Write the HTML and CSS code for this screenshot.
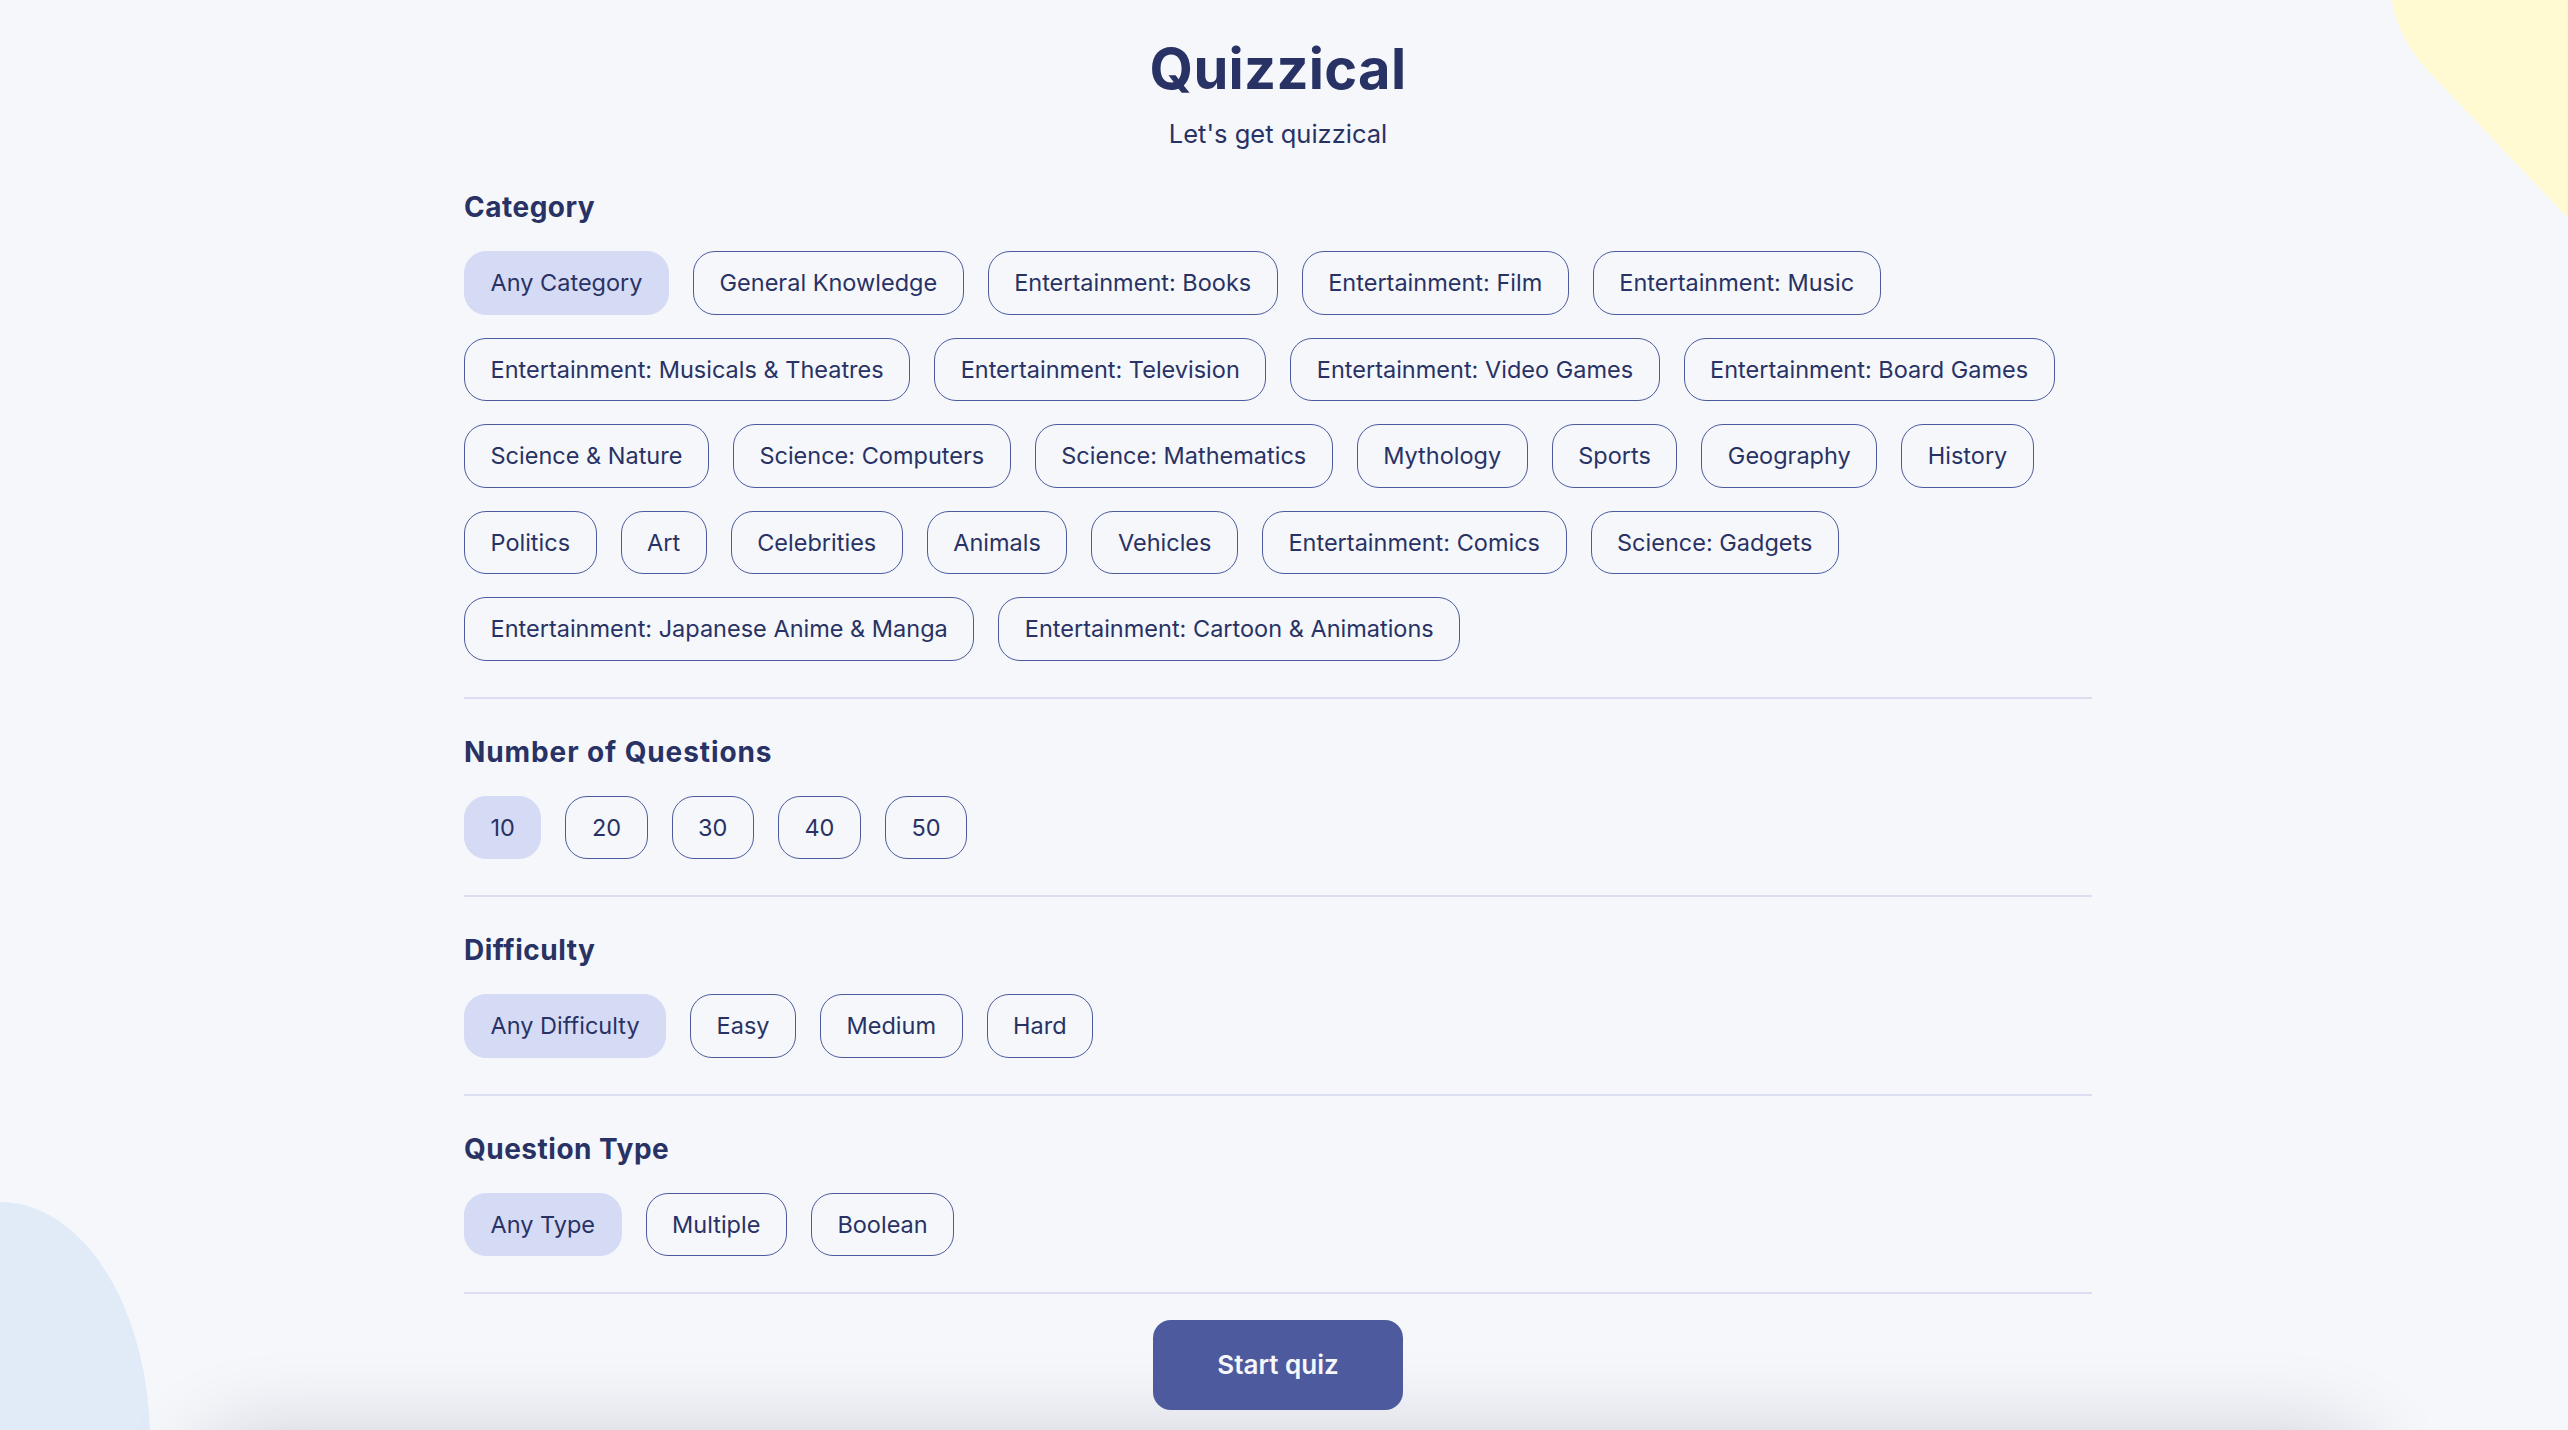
FILE: index.html
```html
<!DOCTYPE html>
<html lang="en">
<head>
<meta charset="utf-8">
<title>Quizzical</title>
<link rel="stylesheet" href="styles.css">
</head>
<body>
<div class="page">
  <svg class="blob-yellow" width="180" height="220" viewBox="0 0 180 220" aria-hidden="true"><path d="M4 0 C 8 25, 20 50, 45 76 L 180 218 L 180 0 Z" fill="#FFFAD1"/></svg>
  <div class="blob-blue"></div>
  <div class="bottom-shadow"></div>

  <main class="container">
    <header class="intro">
      <h1 class="title">Quizzical</h1>
      <p class="subtitle">Let's get quizzical</p>
    </header>

    <section class="group">
      <h2 class="group-title">Category</h2>
      <div class="chips">
        <button class="chip selected">Any Category</button>
        <button class="chip">General Knowledge</button>
        <button class="chip">Entertainment: Books</button>
        <button class="chip">Entertainment: Film</button>
        <button class="chip">Entertainment: Music</button>
        <button class="chip">Entertainment: Musicals &amp; Theatres</button>
        <button class="chip">Entertainment: Television</button>
        <button class="chip">Entertainment: Video Games</button>
        <button class="chip">Entertainment: Board Games</button>
        <button class="chip">Science &amp; Nature</button>
        <button class="chip">Science: Computers</button>
        <button class="chip">Science: Mathematics</button>
        <button class="chip">Mythology</button>
        <button class="chip">Sports</button>
        <button class="chip">Geography</button>
        <button class="chip">History</button>
        <button class="chip">Politics</button>
        <button class="chip">Art</button>
        <button class="chip">Celebrities</button>
        <button class="chip">Animals</button>
        <button class="chip">Vehicles</button>
        <button class="chip">Entertainment: Comics</button>
        <button class="chip">Science: Gadgets</button>
        <button class="chip">Entertainment: Japanese Anime &amp; Manga</button>
        <button class="chip">Entertainment: Cartoon &amp; Animations</button>
      </div>
    </section>
    <hr class="divider">

    <section class="group">
      <h2 class="group-title wide">Number of Questions</h2>
      <div class="chips">
        <button class="chip selected">10</button>
        <button class="chip">20</button>
        <button class="chip">30</button>
        <button class="chip">40</button>
        <button class="chip">50</button>
      </div>
    </section>
    <hr class="divider">

    <section class="group">
      <h2 class="group-title">Difficulty</h2>
      <div class="chips">
        <button class="chip selected">Any Difficulty</button>
        <button class="chip">Easy</button>
        <button class="chip">Medium</button>
        <button class="chip">Hard</button>
      </div>
    </section>
    <hr class="divider">

    <section class="group">
      <h2 class="group-title">Question Type</h2>
      <div class="chips">
        <button class="chip selected">Any Type</button>
        <button class="chip">Multiple</button>
        <button class="chip">Boolean</button>
      </div>
    </section>
    <hr class="divider">

    <div class="actions">
      <button class="start">Start quiz</button>
    </div>
  </main>
</div>
</body>
</html>
```

FILE: styles.css
```css
html, body {
  margin: 0;
  padding: 0;
  height: 100%;
  overflow: hidden;
  background: #F5F7FB;
}

body {
  font-family: Inter, "Noto Sans", "Liberation Sans", sans-serif;
  color: #293264;
}

.page {
  position: relative;
  height: 1430px;
  overflow: hidden;
  padding-right: 12px;
}

.blob-yellow {
  position: absolute;
  top: 0;
  right: 0;
  display: block;
}

.blob-blue {
  position: absolute;
  left: -150px;
  top: 1202px;
  width: 300px;
  height: 476px;
  border-radius: 50%;
  background: #E1EBF8;
}

.bottom-shadow {
  position: absolute;
  left: 210px;
  right: 210px;
  top: 1450px;
  height: 300px;
  border-radius: 40px;
  background: #F5F7FB;
  box-shadow: 0 0 90px 10px rgba(20, 20, 40, 0.2);
}

.container {
  position: relative;
  width: 1628px;
  margin: 0 auto;
  padding-top: 34px;
}

.intro {
  text-align: center;
}

.title {
  margin: 0;
  font-size: 56px;
  line-height: 70px;
  font-weight: 700;
  letter-spacing: 0.3px;
}

.subtitle {
  margin: 14px 0 0;
  font-size: 25.5px;
  line-height: 32px;
  font-weight: 400;
}

.group-title {
  margin: 0 0 27px;
  font-size: 28px;
  line-height: 34px;
  font-weight: 700;
  letter-spacing: 0.5px;
}

.group-title.wide {
  letter-spacing: 0.9px;
}

.intro + .group {
  margin-top: 40px;
}

.chips {
  display: flex;
  flex-wrap: wrap;
  gap: 23px 24px;
}

.chip {
  font-family: Inter, "Noto Sans", "Liberation Sans", sans-serif;
  font-size: 23.5px;
  line-height: 29.5px;
  font-weight: 400;
  color: #293264;
  background: transparent;
  border: 1px solid #4D5B9E;
  border-radius: 22px;
  padding: 16px 25.5px;
  margin: 0;
  cursor: pointer;
}

.chip.selected {
  background: #D6DBF5;
  border-color: #D6DBF5;
}

.divider {
  margin: 36px 0;
  border: 0;
  height: 2px;
  background: #DBDEF0;
}

.actions {
  display: flex;
  justify-content: center;
  margin-top: -10px;
}

.start {
  font-family: Inter, "Noto Sans", "Liberation Sans", sans-serif;
  font-size: 26px;
  line-height: 32px;
  font-weight: 600;
  color: #F5F7FB;
  background: #4D5B9E;
  border: 0;
  border-radius: 18px;
  padding: 29px 64px;
  cursor: pointer;
}
```
